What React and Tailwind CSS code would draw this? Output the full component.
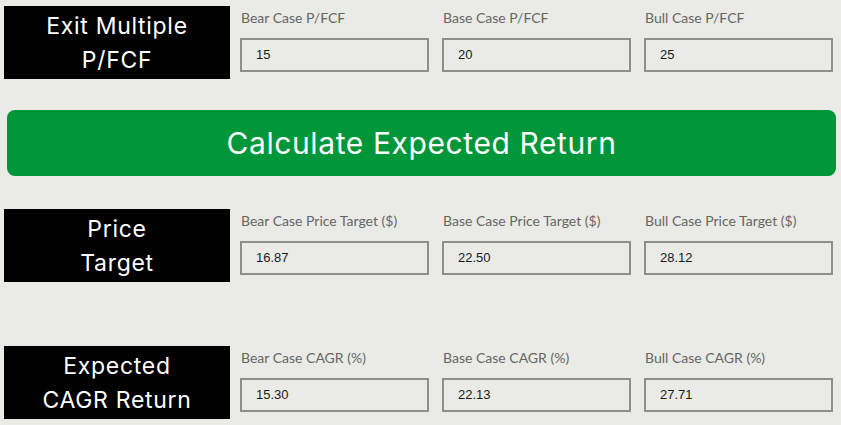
import React from "react";

const rows = [
  {
    title: ["Exit Multiple", "P/FCF"],
    fields: [
      { label: "Bear Case P/FCF", value: "15" },
      { label: "Base Case P/FCF", value: "20" },
      { label: "Bull Case P/FCF", value: "25" },
    ],
  },
  {
    title: ["Price", "Target"],
    fields: [
      { label: "Bear Case Price Target ($)", value: "16.87" },
      { label: "Base Case Price Target ($)", value: "22.50" },
      { label: "Bull Case Price Target ($)", value: "28.12" },
    ],
  },
  {
    title: ["Expected", "CAGR Return"],
    fields: [
      { label: "Bear Case CAGR (%)", value: "15.30" },
      { label: "Base Case CAGR (%)", value: "22.13" },
      { label: "Bull Case CAGR (%)", value: "27.71" },
    ],
  },
];

function Row({ row }) {
  return (
    <div className="flex items-start">
      {/* black title box */}
      <div className="w-[226px] h-[73px] bg-black text-white flex flex-col items-center justify-center text-[23px] leading-[34px] font-['Inter',sans-serif] tracking-[0.7px]">
        {row.title.map((t) => (
          <div key={t}>{t}</div>
        ))}
      </div>
      <div className="ml-[10px] mt-[4px] grid grid-cols-[189px_189px_189px] gap-x-[13px]">
        {row.fields.map((f) => (
          <div key={f.label} className="flex flex-col">
            <label className="text-[14px] leading-[16px] text-[#666666] font-['Lato',sans-serif] pl-[1px]">
              {f.label}
            </label>
            <div className="mt-[12px] h-[34px] border-2 border-[#8e8e8e] flex items-center pl-[14px] text-[13px] text-[#1a1a1a] font-['Liberation_Sans',sans-serif]">
              {f.value}
            </div>
          </div>
        ))}
      </div>
    </div>
  );
}

export default function App() {
  return (
    <div className="w-[841px] h-[425px] bg-[#eaebe6] overflow-hidden pl-[4px] pt-[6px]">
      <Row row={rows[0]} />
      <button className="mt-[31px] ml-[3px] w-[829px] h-[66px] rounded-[8px] bg-[#00963a] text-white text-[30px] font-['Inter',sans-serif] tracking-[0.6px]">
        Calculate Expected Return
      </button>
      <div className="mt-[33px]">
        <Row row={rows[1]} />
      </div>
      <div className="mt-[64px]">
        <Row row={rows[2]} />
      </div>
    </div>
  );
}
